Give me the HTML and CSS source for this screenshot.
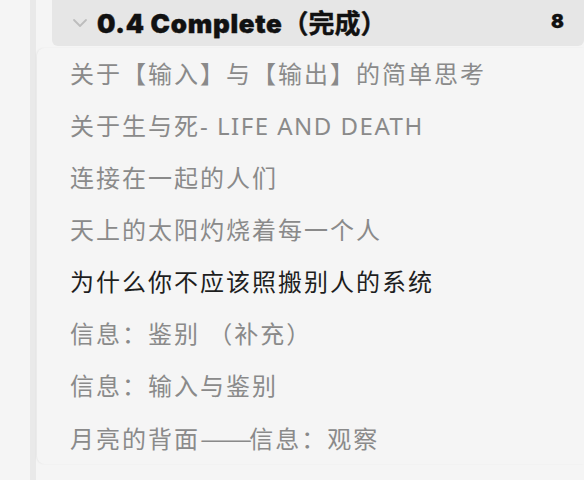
FILE: index.html
```html
<!DOCTYPE html>
<html>
<head>
<meta charset="utf-8">
<link rel="stylesheet" href="styles.css">
</head>
<body>
<div class="page">
  <div class="rail"></div>
  <div class="main">
    <div class="group-head">
      <svg class="chev" width="16" height="10" viewBox="0 0 16 10"><path d="M2 2 L8 8 L14 2" fill="none" stroke="#bdbdbd" stroke-width="1.8" stroke-linecap="round" stroke-linejoin="round"/></svg>
      <span class="title">0.4 Complete<span class="cjk">（完成）</span></span>
      <span class="count">8</span>
    </div>
    <ul class="list">
      <li class="item">关于【输入】与【输出】的简单思考</li>
      <li class="item">关于生与死<span class="latin">- LIFE AND DEATH</span></li>
      <li class="item">连接在一起的人们</li>
      <li class="item">天上的太阳灼烧着每一个人</li>
      <li class="item active">为什么你不应该照搬别人的系统</li>
      <li class="item">信息：鉴别 （补充）</li>
      <li class="item">信息：输入与鉴别</li>
      <li class="item">月亮的背面<span class="dash">——</span>信息：观察</li>
    </ul>
  </div>
</div>
</body>
</html>
```

FILE: styles.css
```css
html, body {
  margin: 0;
  padding: 0;
  background: #f5f5f5;
  height: 100%;
  overflow: hidden;
}
.page {
  display: flex;
  height: 480px;
  padding-left: 30px;
  font-family: "Noto Sans", "Noto Sans CJK SC", sans-serif;
}
.rail {
  width: 6px;
  background: #e9e9e9;
  flex: none;
}
.main {
  flex: 1;
  display: flex;
  flex-direction: column;
}
.group-head {
  margin-left: 16px;
  margin-top: -6px;
  height: 52px;
  background: #e6e6e6;
  border-radius: 6px;
  display: flex;
  align-items: center;
  padding: 3px 20px 0 20px;
  box-sizing: border-box;
}
.chev {
  flex: none;
  margin-right: 9px;
  margin-top: 3px;
}
.title {
  font-family: Inter, "Noto Sans CJK SC", sans-serif;
  font-weight: 900;
  font-size: 26px;
  color: #111;
  flex: 1;
  letter-spacing: 0.7px;
  -webkit-text-stroke: 0.4px #111;
}
.title .cjk {
  font-family: "Noto Sans CJK SC", sans-serif;
  font-weight: 700;
  letter-spacing: 0;
}
.count {
  font-family: Inter, sans-serif;
  font-weight: 900;
  font-size: 19px;
  color: #111;
  -webkit-text-stroke: 0.3px #111;
}
.list {
  list-style: none;
  margin: 2px 0 0 1px;
  padding: 0 0 0 33px;
  border-radius: 8px 0 0 8px;
  box-shadow: -1px 0 2px rgba(0,0,0,0.06);
  height: 416px;
  box-sizing: border-box;
}
.item {
  height: 52px;
  line-height: 52px;
  font-size: 24px;
  color: #8a8a8a;
  white-space: nowrap;
  letter-spacing: 2px;
}
.item .latin {
  letter-spacing: 1.5px;
}
.item .dash {
  display: inline-block;
  font-family: "Noto Sans CJK SC", sans-serif;
  letter-spacing: 0;
  transform: scaleX(1.3);
  transform-origin: left center;
  margin-right: 9px;
}
.item.active {
  color: #1e1e1e;
}
```
